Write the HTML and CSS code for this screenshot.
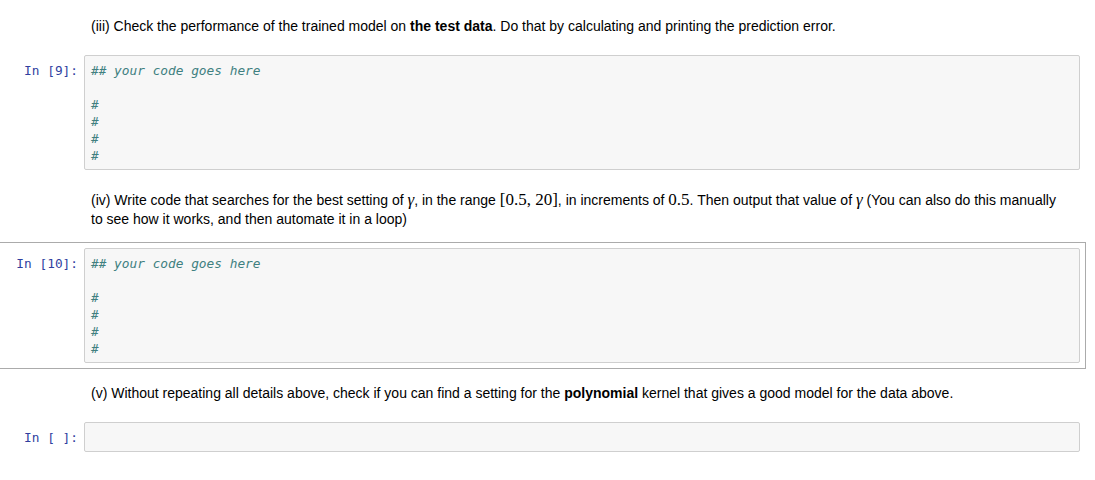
FILE: index.html
```html
<!DOCTYPE html>
<html>
<head>
<meta charset="utf-8">
<link rel="stylesheet" href="styles.css">
</head>
<body>
<div class="notebook">
  <div class="cell">
    <div class="prompt"></div>
    <div class="md">(iii) Check the performance of the trained model on <b>the test data</b>. Do that by calculating and printing the prediction error.</div>
  </div>
  <div class="cell">
    <div class="prompt code-prompt">In&nbsp;[9]:</div>
    <div class="input"><pre><span class="cm">## your code goes here</span>

<span class="cm">#</span>
<span class="cm">#</span>
<span class="cm">#</span>
<span class="cm">#</span></pre></div>
  </div>
  <div class="cell">
    <div class="prompt"></div>
    <div class="md">(iv) Write code that searches for the best setting of <span class="mi">γ</span>, in the range <span class="mn">[0.5, 20]</span>, in increments of <span class="mn">0.5</span>. Then output that value of <span class="mi">γ</span> (You can also do this manually<br>to see how it works, and then automate it in a loop)</div>
  </div>
  <div class="cell selected">
    <div class="prompt code-prompt">In&nbsp;[10]:</div>
    <div class="input"><pre><span class="cm">## your code goes here</span>

<span class="cm">#</span>
<span class="cm">#</span>
<span class="cm">#</span>
<span class="cm">#</span></pre></div>
  </div>
  <div class="cell">
    <div class="prompt"></div>
    <div class="md">(v) Without repeating all details above, check if you can find a setting for the <b>polynomial</b> kernel that gives a good model for the data above.</div>
  </div>
  <div class="cell">
    <div class="prompt code-prompt">In&nbsp;[&nbsp;]:</div>
    <div class="input"><pre> </pre></div>
  </div>
</div>
</body>
</html>
```

FILE: styles.css
```css
html, body {
  margin: 0;
  padding: 0;
  background: #ffffff;
}

body {
  font-family: "Liberation Sans", Arial, sans-serif;
  font-size: 14px;
  color: #000000;
}

.notebook {
  width: 1087px;
  margin-left: -1px;
  padding-top: 2px;
  display: flex;
  flex-direction: column;
}

.cell {
  display: flex;
  align-items: flex-start;
  padding: 5px;
  border: 1px solid transparent;
}

.cell.selected {
  border-color: #ababab;
}

.prompt {
  flex: 0 0 79px;
  box-sizing: border-box;
  padding-right: 6px;
  text-align: right;
}

.code-prompt {
  font-family: "DejaVu Sans Mono", "Liberation Mono", monospace;
  font-size: 12.8px;
  line-height: 17px;
  padding-top: 7px;
  color: #303f9f;
  white-space: nowrap;
}

.md {
  flex: 1;
  padding: 9px 7px 7px;
  line-height: 19px;
}

.md b {
  font-weight: bold;
}

.mi {
  font-family: "Liberation Serif", "Times New Roman", serif;
  font-style: italic;
  font-size: 17px;
  line-height: 1;
}

.mn {
  font-family: "Liberation Serif", "Times New Roman", serif;
  font-size: 17px;
  line-height: 1;
}

.input {
  flex: 1;
  background: #f7f7f7;
  border: 1px solid #cfcfcf;
  border-radius: 2px;
}

.input pre {
  margin: 0;
  padding: 6px 6px 5px;
  font-family: "DejaVu Sans Mono", "Liberation Mono", monospace;
  font-size: 12.8px;
  line-height: 17px;
  color: #000;
}

.cm {
  color: #408080;
  font-style: italic;
}
```
